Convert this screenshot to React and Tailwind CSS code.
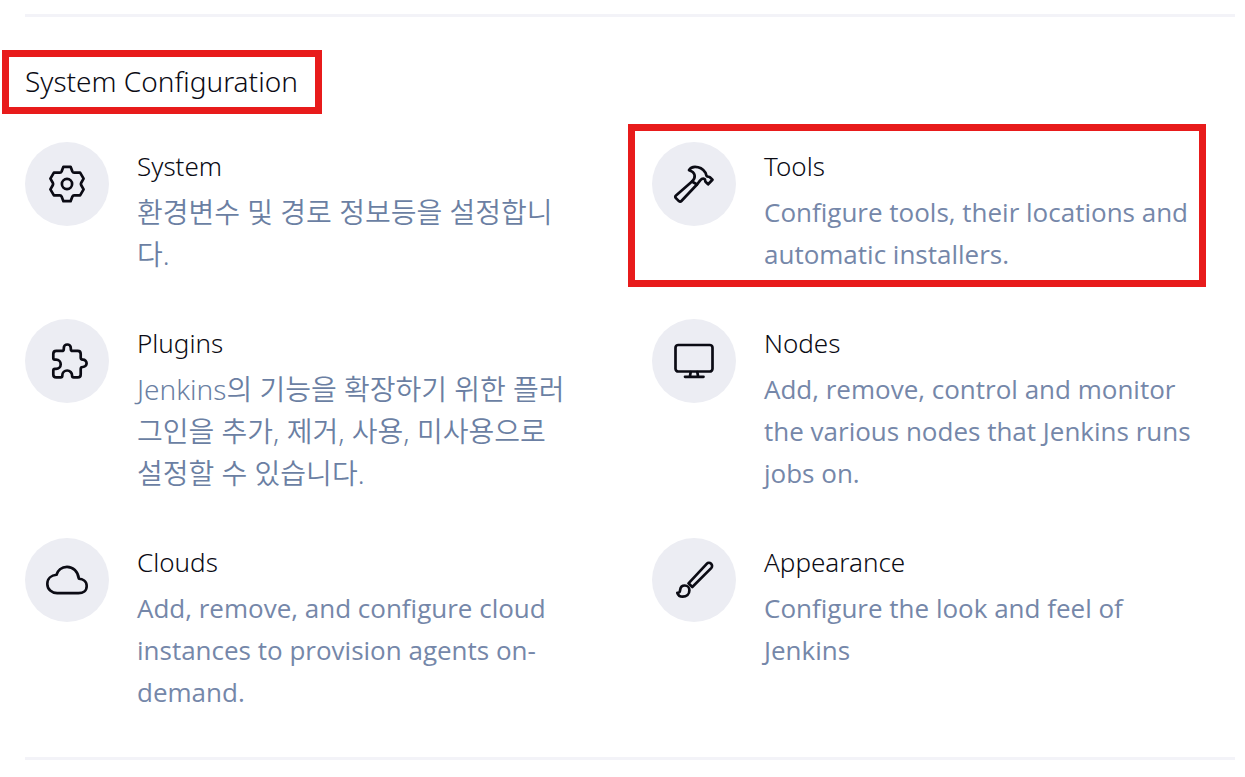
import { IoCloudOutline } from "react-icons/io5";

function Glyph({ children }) {
  return (
    <svg
      viewBox="0 0 42 42"
      className="size-[42px]"
      fill="none"
      stroke="currentColor"
      strokeWidth="2.7"
      strokeLinecap="round"
      strokeLinejoin="round"
      aria-hidden="true"
    >
      {children}
    </svg>
  );
}

function GearIcon() {
  return (
    <Glyph>
      <path d="M17.400 3.800h7.200l1.800 4.700q.5 1.100 1.700 1.100h6l3.500 6-2.500 4.400q-.5 1 0 2l2.500 4.400-3.500 6h-6q-1.200 0-1.700 1.100l-1.800 4.700h-7.200l-1.800-4.700q-.5-1.100-1.700-1.100h-6l-3.500-6 2.500-4.400q.5-1 0-2l-2.500-4.400 3.500-6h6q1.200 0 1.700-1.100z" />
      <circle cx="21" cy="21" r="5.1" />
    </Glyph>
  );
}

function HammerIcon() {
  return (
    <Glyph>
      <path d="M19 18.500 3 32.500q-1.400 1.300-.1 2.600l3 3q1.300 1.200 2.500-.1L24 21.500" />
      <path d="M19 18.500q3.200-2.700 2.600-6.200-.7-3.700-5.600-5.100c1.200-2.200 3.300-3.400 6-3.400 4.200 0 8.200 2.400 10.300 5.600 1 1.600.6 3 1.600 3.900.8.7 2.200.2 3 .9l2.600 2.500-4.400 4.600-2.600-2.500c-.6-.8 0-2-.8-2.600-1.300-.9-3.300-.2-4.700 1.400L24 21.500z" />
    </Glyph>
  );
}

function PuzzleIcon() {
  return (
    <Glyph>
      <path d="M10.300 10.900h5.500q2 0 2-2V8a3.500 3.500 0 0 1 7 0v.9q0 2 2 2h4.900q3 0 3 3v3.700q0 2 2 2h.200a3.700 3.700 0 0 1 0 7.400h-.2q-2 0-2 2v5.400q0 3-3 3h-4q-1.600 0-1.600-1.600v-.4a4.900 4.900 0 0 0-9.800 0v.4q0 1.600-1.600 1.600h-4.400q-3 0-3-3v-4q0-1.600 1.600-1.600h1.200a4.600 4.600 0 0 0 0-9.200H8.900q-1.600 0-1.600-1.600v-4.100q0-3 3-3z" />
    </Glyph>
  );
}

function MonitorIcon() {
  return (
    <Glyph>
      <rect x="2.500" y="5" width="37" height="26.500" rx="2.800" />
      <path d="M17.700 32l-.8 4.500M24.300 32l.8 4.500M12 36.800h18.500" />
    </Glyph>
  );
}

function BrushIcon() {
  return (
    <Glyph>
      <path d="M15.500 24.300 33.700 4.800a3.100 3.100 0 0 1 4.500 4.300L19.300 28z" />
      <path d="M4.300 33.800c2.300.3 2.700-1.300 2.900-3.100.3-2.500 2.200-4.200 4.600-4.200 2.600 0 4.600 2 4.600 4.700 0 3.900-2.900 6.500-6.700 6.500-2.400 0-4.600-1.400-5.400-3.900z" />
    </Glyph>
  );
}

const items = [
  { title: "System", icon: <GearIcon />, korean: true, lines: ["환경변수 및 경로 정보등을 설정합니", "다."] },
  {
    title: "Tools",
    icon: <HammerIcon />,
    highlighted: true,
    lines: ["Configure tools, their locations and", "automatic installers."],
  },
  {
    title: "Plugins",
    icon: <PuzzleIcon />,
    korean: true,
    lines: ["Jenkins의 기능을 확장하기 위한 플러", "그인을 추가, 제거, 사용, 미사용으로", "설정할 수 있습니다."],
  },
  {
    title: "Nodes",
    icon: <MonitorIcon />,
    lines: ["Add, remove, control and monitor", "the various nodes that Jenkins runs", "jobs on."],
  },
  {
    title: "Clouds",
    icon: <IoCloudOutline className="size-[42px]" aria-hidden="true" />,
    lines: ["Add, remove, and configure cloud", "instances to provision agents on-", "demand."],
  },
  {
    title: "Appearance",
    icon: <BrushIcon />,
    lines: ["Configure the look and feel of", "Jenkins"],
  },
];

function Item({ title, icon, lines, korean, highlighted }) {
  return (
    <a href="#" className="relative flex items-start gap-7">
      {highlighted && (
        <span className="pointer-events-none absolute -top-[18px] right-[29px] -bottom-[12px] -left-6 border-[7px] border-[#e81b1b]" />
      )}
      <span className="flex size-[84px] shrink-0 items-center justify-center rounded-full bg-[#ecedf3]">{icon}</span>
      <span className="flex flex-col gap-1 pt-[3px] leading-[42px] whitespace-nowrap">
        <span className="text-[26px]">{title}</span>
        <span
          className={
            korean
              ? "text-[28px] text-[#6b7fa3]"
              : "font-['Open_Sans',sans-serif] text-[26px] font-normal text-[#7587a9]"
          }
        >
          {lines.map((line) => (
            <span key={line} className="block">
              {line}
            </span>
          ))}
        </span>
      </span>
    </a>
  );
}

export default function App() {
  return (
    <main className="bg-white pt-[14px] pr-[10px] pb-4 pl-[25px] font-['Noto_Sans','Noto_Sans_CJK_KR',sans-serif] font-[350] text-[#0b0b14]">
      <hr className="border-t-[3px] border-[#f3f3f8]" />
      <h2 className="relative mt-[43px] w-fit text-[28px] leading-[42px] font-[350]">
        System Configuration
        <span className="pointer-events-none absolute -top-[10px] -right-6 -bottom-[12px] -left-[23px] border-[7px] border-[#e81b1b]" />
      </h2>
      <section className="mt-[40px] mb-11 grid grid-cols-2 gap-11">
        {items.map((item) => (
          <Item key={item.title} {...item} />
        ))}
      </section>
      <hr className="border-t-[3px] border-[#f3f3f8]" />
    </main>
  );
}
